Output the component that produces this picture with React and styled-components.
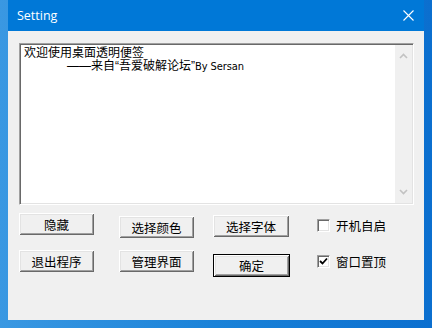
import styled, { createGlobalStyle } from "styled-components"

const Global = createGlobalStyle`
  html, body {
    margin: 0;
    padding: 0;
    width: 432px;
    height: 328px;
    overflow: hidden;
    background: linear-gradient(90deg, #3a98e2 0%, #1a82d8 50%, #0b6fcf 100%);
    font-family: "Liberation Sans", "Noto Sans CJK SC", sans-serif;
  }
`

const Desktop = styled.div`
  padding-left: 8px;
  width: 432px;
  height: 328px;
  box-sizing: border-box;
`

const Window = styled.div`
  width: 416px;
  height: 320px;
  background: #f0f0f0;
  display: flex;
  flex-direction: column;
`

const TitleBar = styled.div`
  height: 31px;
  background: #0078d7;
  display: flex;
  align-items: center;
  justify-content: space-between;
  padding: 0 10px 0 9px;
  color: #fff;
  font-family: "Open Sans", "Liberation Sans", sans-serif;
  font-size: 12.5px;
`

const Title = styled.span`
  margin-top: -1px;
`

const Content = styled.div`
  padding: 12px 10px 0 11px;
`

const Memo = styled.div`
  width: 395px;
  height: 162px;
  box-sizing: border-box;
  display: flex;
  background: #fff;
  border-top: 1px solid #a0a0a0;
  border-left: 1px solid #a0a0a0;
  border-right: 1px solid #fff;
  border-bottom: 1px solid #fff;
  box-shadow: inset 1px 1px 0 #696969, inset -1px -1px 0 #e3e3e3;
`

const MemoText = styled.div`
  flex: 1;
  padding: 3px 0 0 4px;
  font-size: 12px;
  line-height: 13px;
  color: #000;
`

const Line = styled.div`
  padding-left: ${(p) => p.$indent || 0}px;
  white-space: nowrap;
`

const Latin = styled.span`
  font-family: "DejaVu Sans Condensed", "Liberation Sans", sans-serif;
  font-size: 11px;
  letter-spacing: -0.1px;
`

const ScrollBar = styled.div`
  width: 17px;
  margin: 1px 1px 1px 0;
  background: #f0f0f0;
  display: flex;
  flex-direction: column;
  justify-content: space-between;
  align-items: center;
  padding: 8px 0 8px;
`

const Controls = styled.div`
  display: grid;
  grid-template-columns: 100px 94px 104px 1fr;
  grid-auto-rows: 37px;
  margin-top: 8px;
  align-items: start;
`

const Button = styled.button`
  margin-top: ${(p) => p.$dy || 0}px;
  width: ${(p) => p.$w || 75}px;
  height: ${(p) => (p.$default ? 23 : 22)}px;
  padding: 0;
  box-sizing: border-box;
  background: #f0f0f0;
  font-family: "Noto Sans CJK SC", sans-serif;
  font-size: 12.5px;
  color: #000;
  border: ${(p) => (p.$default ? "1px solid #000" : "none")};
  box-shadow: inset 1px 1px 0 #fff, inset -1px -1px 0 #696969,
    inset 2px 2px 0 #e3e3e3, inset -2px -2px 0 #a0a0a0;
  cursor: pointer;
`

const CheckRow = styled.label`
  margin-top: ${(p) => p.$dy || 0}px;
  display: flex;
  align-items: center;
  gap: 6px;
  font-family: "Noto Sans CJK SC", sans-serif;
  font-size: 12.5px;
  line-height: 13px;
  color: #000;
`

const Box = styled.span`
  width: 13px;
  height: 13px;
  box-sizing: border-box;
  background: #fff;
  border-top: 1px solid #a0a0a0;
  border-left: 1px solid #a0a0a0;
  border-right: 1px solid #fff;
  border-bottom: 1px solid #fff;
  box-shadow: inset 1px 1px 0 #696969, inset -1px -1px 0 #e3e3e3;
  display: flex;
  align-items: center;
  justify-content: center;
`

const Chevron = ({ up }) => (
  <svg width="9" height="6" viewBox="0 0 9 6">
    <path
      d={up ? "M1 5 L4.5 1.5 L8 5" : "M1 1 L4.5 4.5 L8 1"}
      fill="none"
      stroke="#c2c2c2"
      strokeWidth="1.6"
    />
  </svg>
)

const Check = ({ checked, label, dy }) => (
  <CheckRow $dy={dy}>
    <Box>
      {checked && (
        <svg width="9" height="9" viewBox="0 0 9 9">
          <path d="M1 4 L3.5 6.5 L8 1.5" fill="none" stroke="#000" strokeWidth="1.8" />
        </svg>
      )}
    </Box>
    {label}
  </CheckRow>
)

export default function App() {
  return (
    <Desktop>
      <Global />
      <Window>
        <TitleBar>
          <Title>Setting</Title>
          <svg width="11" height="11" viewBox="0 0 11 11">
            <path d="M0.5 0.5 L10.5 10.5 M10.5 0.5 L0.5 10.5" stroke="#fff" strokeWidth="1.1" />
          </svg>
        </TitleBar>
        <Content>
          <Memo>
            <MemoText>
              <Line>欢迎使用桌面透明便签</Line>
              <Line $indent={43}>
                ——来自“吾爱破解论坛”<Latin>By Sersan</Latin>
              </Line>
            </MemoText>
            <ScrollBar>
              <Chevron up />
              <Chevron />
            </ScrollBar>
          </Memo>
          <Controls>
            <Button>隐藏</Button>
            <Button $dy={3}>选择颜色</Button>
            <Button $dy={2} $w={76}>选择字体</Button>
            <Check label="开机自启" dy={6} />
            <Button>退出程序</Button>
            <Button>管理界面</Button>
            <Button $dy={4} $w={77} $default>确定</Button>
            <Check checked label="窗口置顶" dy={5} />
          </Controls>
        </Content>
      </Window>
    </Desktop>
  )
}
